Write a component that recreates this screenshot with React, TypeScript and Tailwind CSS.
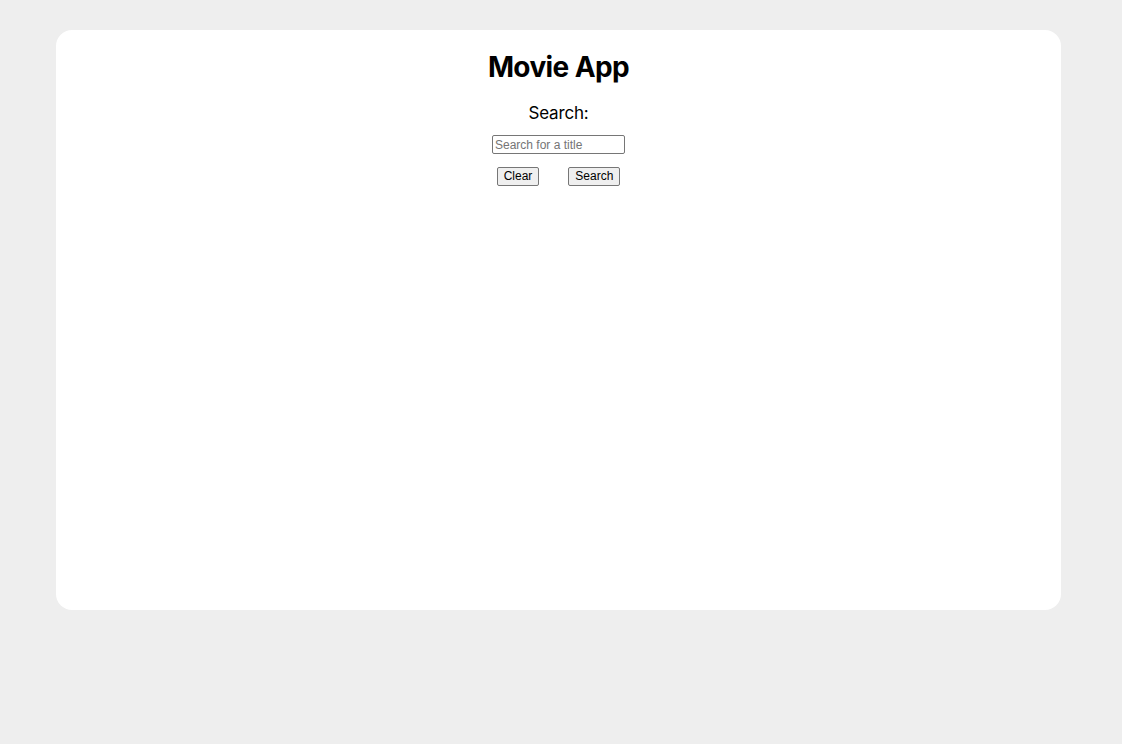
import React from 'react';

export default function App() {
  return (
    <div className="min-h-[744px] bg-[#eeeeee] pt-[30px]" style={{ fontFamily: 'Inter, "Liberation Sans", sans-serif' }}>
      <div className="ml-[56px] w-[1005px] h-[580px] bg-white rounded-[16px] flex flex-col items-center">
        <h1 className="mt-[20px] text-[28px] leading-[34px] font-bold tracking-[-0.6px] text-black">Movie App</h1>
        <label className="mt-[18px] text-[17px] leading-[22px] tracking-[-0.2px] text-black">Search:</label>
        <input
          type="text"
          placeholder="Search for a title"
          className="mt-[11px] w-[133px] h-[19px] border border-[#767676] rounded-[2px] px-[2px] text-[12px] placeholder:text-[#757575] outline-none"
          style={{ fontFamily: '"Liberation Sans", Arial, sans-serif' }}
        />
        <div className="mt-[13px] flex gap-[29px]" style={{ fontFamily: '"Liberation Sans", Arial, sans-serif' }}>
          <button className="h-[19px] px-[6px] text-[12px] leading-[15px] bg-[#efefef] border border-[#767676] rounded-[2px] text-black">Clear</button>
          <button className="h-[19px] px-[6px] text-[12px] leading-[15px] bg-[#efefef] border border-[#767676] rounded-[2px] text-black">Search</button>
        </div>
      </div>
    </div>
  );
}
